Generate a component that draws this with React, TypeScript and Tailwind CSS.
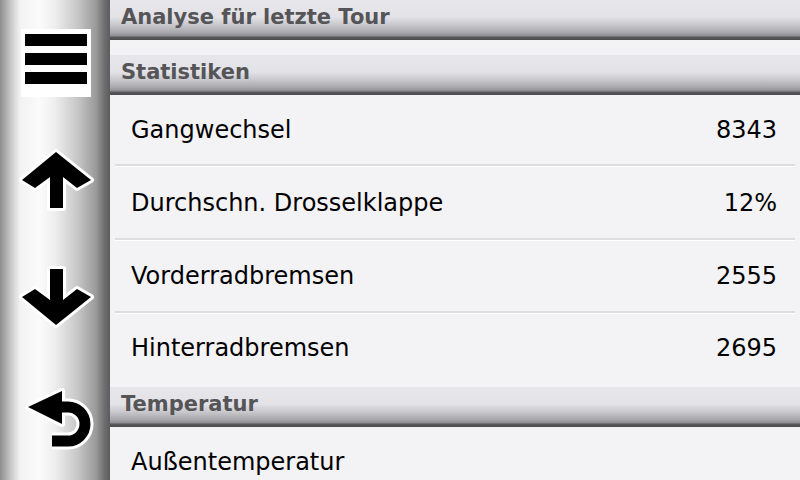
const headerBg =
  "bg-[linear-gradient(to_bottom,#e7e6ea_0px,#e3e2e6_17px,#c8c8cc_25px,#a6a6aa_33px,#8c8c90_36px,#5a5a5c_37px,#4c4c4e_40px)]"

function SectionHeader({ title }: { title: string }) {
  return (
    <div className={`h-[40px] shrink-0 flex items-center pl-[11px] pb-[5px] ${headerBg}`}>
      <span className="text-[21px] leading-none font-bold text-[#555558] font-['DejaVu_Sans',sans-serif]">
        {title}
      </span>
    </div>
  )
}

function Row({ label, value, h }: { label: string; value?: string; h: string }) {
  return (
    <div className={`${h} shrink-0 flex items-center justify-between pl-[21px] pr-[23px]`}>
      <span className="text-[24px] leading-none text-black font-['DejaVu_Sans',sans-serif]">{label}</span>
      {value && (
        <span className="text-[24px] leading-none text-black font-['DejaVu_Sans',sans-serif]">{value}</span>
      )}
    </div>
  )
}

function Divider() {
  return <div className="h-[3px] shrink-0 mx-[5px] bg-[#dddcdf] border-b border-white" />
}

function MenuIcon() {
  return (
    <svg width="80" height="80" viewBox="17 20 80 80">
      <rect x="21" y="29" width="70" height="68" fill="#fff" />
      <rect x="25" y="34" width="62" height="12" fill="#000" />
      <rect x="25" y="53" width="62" height="12" fill="#000" />
      <rect x="25" y="72" width="62" height="12" fill="#000" />
    </svg>
  )
}

function UpIcon() {
  return (
    <svg width="80" height="80" viewBox="17 140 80 80">
      <path
        d="M56 152 L91 180 L77 188 L63 177 L63 208 L50 208 L50 177 L35 188 L22 180 Z"
        fill="#000"
        stroke="#fff"
        strokeWidth="6"
        strokeLinejoin="round"
        paintOrder="stroke"
      />
    </svg>
  )
}

function DownIcon() {
  return (
    <svg width="80" height="80" viewBox="17 260 80 80">
      <path
        d="M56 325 L91 297 L77 289 L63 300 L63 269 L50 269 L50 300 L35 289 L22 297 Z"
        fill="#000"
        stroke="#fff"
        strokeWidth="6"
        strokeLinejoin="round"
        paintOrder="stroke"
      />
    </svg>
  )
}

function BackIcon() {
  return (
    <svg width="80" height="80" viewBox="17 380 80 80">
      <path d="M60 407 L68 407 A17 17 0 0 1 68 441 L52 441" fill="none" stroke="#fff" strokeWidth="17" />
      <path d="M28 407 L62 391 L62 424 Z" fill="#fff" stroke="#fff" strokeWidth="6" strokeLinejoin="round" />
      <path d="M60 407 L68 407 A17 17 0 0 1 68 441 L52 441" fill="none" stroke="#000" strokeWidth="11" />
      <path d="M28 407 L62 391 L62 424 Z" fill="#000" />
    </svg>
  )
}

export default function App() {
  return (
    <div className="w-[800px] h-[480px] flex overflow-hidden bg-[#f3f2f5]">
      {/* side button strip */}
      <div className="w-[110px] h-full shrink-0 flex flex-col pl-[4px] bg-[linear-gradient(to_right,#8e8e8e_0px,#c4c4c4_10px,#f2f2f2_20px,#fbfbfb_40px,#eeeeee_55px,#c6c6c6_78px,#9a9a9a_96px,#707070_104px,#5c5c5c_110px)]">
        <div className="h-[120px] flex items-center justify-center">
          <MenuIcon />
        </div>
        <div className="h-[120px] flex items-center justify-center">
          <UpIcon />
        </div>
        <div className="h-[120px] flex items-center justify-center">
          <DownIcon />
        </div>
        <div className="h-[120px] flex items-center justify-center">
          <BackIcon />
        </div>
      </div>

      {/* list */}
      <div className="flex-1 flex flex-col overflow-hidden">
        <SectionHeader title="Analyse für letzte Tour" />
        <div className="h-[15px] shrink-0" />
        <SectionHeader title="Statistiken" />
        <Row h="h-[69px]" label="Gangwechsel" value="8343" />
        <Divider />
        <Row h="h-[71px]" label="Durchschn. Drosselklappe" value="12%" />
        <Divider />
        <Row h="h-[70px]" label="Vorderradbremsen" value="2555" />
        <Divider />
        <Row h="h-[73px] pb-[5px]" label="Hinterradbremsen" value="2695" />
        <SectionHeader title="Temperatur" />
        <Row h="h-[70px]" label="Außentemperatur" />
      </div>
    </div>
  )
}
